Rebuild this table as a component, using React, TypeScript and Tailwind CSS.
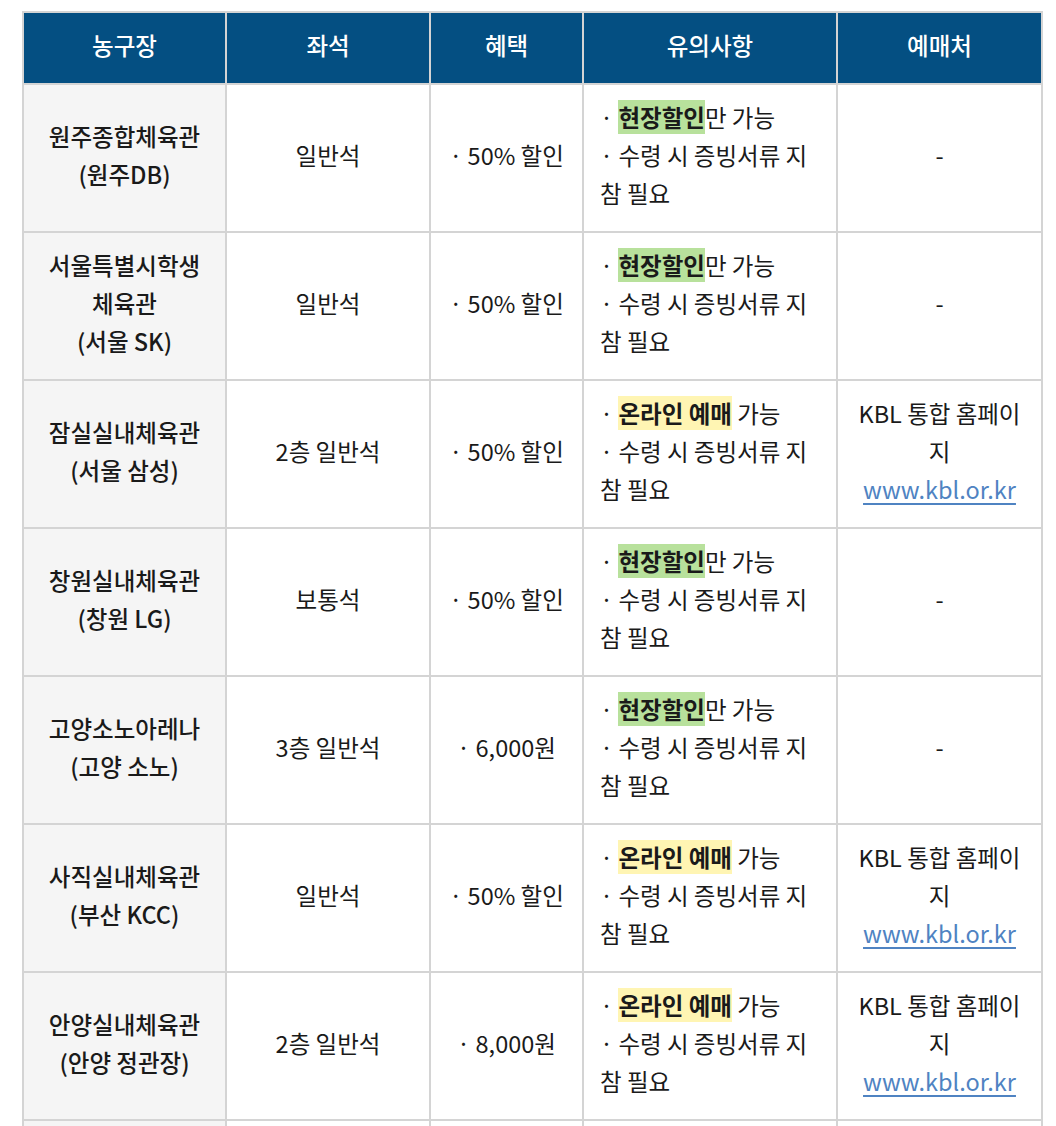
import React from 'react';

type Row = {
  arena: string[];
  seat: string;
  benefit: string;
  online: boolean;
};

const rows: Row[] = [
  { arena: ['원주종합체육관', '(원주DB)'], seat: '일반석', benefit: '· 50% 할인', online: false },
  { arena: ['서울특별시학생', '체육관', '(서울 SK)'], seat: '일반석', benefit: '· 50% 할인', online: false },
  { arena: ['잠실실내체육관', '(서울 삼성)'], seat: '2층 일반석', benefit: '· 50% 할인', online: true },
  { arena: ['창원실내체육관', '(창원 LG)'], seat: '보통석', benefit: '· 50% 할인', online: false },
  { arena: ['고양소노아레나', '(고양 소노)'], seat: '3층 일반석', benefit: '· 6,000원', online: false },
  { arena: ['사직실내체육관', '(부산 KCC)'], seat: '일반석', benefit: '· 50% 할인', online: true },
  { arena: ['안양실내체육관', '(안양 정관장)'], seat: '2층 일반석', benefit: '· 8,000원', online: true },
  { arena: ['울산동천체육관', '(울산 현대모비스)'], seat: '일반석', benefit: '· 50% 할인', online: false },
];

// text sits a few px above the cell centre in the original
const cell = 'border-2 border-[#d4d4d4] px-4 pt-[13px] pb-[19px] align-middle';

export default function App() {
  return (
    <div
      className="bg-white h-[1126px] overflow-hidden pt-[11px] pl-[22px] text-[23.5px] leading-[38px] text-[#1a1a1a]"
      style={{ fontFamily: '"Noto Sans CJK KR", "Noto Sans", sans-serif' }}
    >
      <table className="table-fixed border-collapse w-[1019px]">
        <colgroup>
          <col className="w-[203px]" />
          <col className="w-[204px]" />
          <col className="w-[153px]" />
          <col className="w-[254px]" />
          <col className="w-[205px]" />
        </colgroup>
        <thead>
          <tr className="bg-[#044f82] text-white">
            {['농구장', '좌석', '혜택', '유의사항', '예매처'].map((h) => (
              <th key={h} className={`${cell} font-medium text-center`}>
                {h}
              </th>
            ))}
          </tr>
        </thead>
        <tbody>
          {rows.map((r) => (
            <tr key={r.arena[0]} className="h-[148px]">
              <td className={`${cell} bg-[#f5f5f5] text-center font-medium`}>
                {r.arena.map((l) => (
                  <div key={l}>{l}</div>
                ))}
              </td>
              <td className={`${cell} text-center`}>{r.seat}</td>
              <td className={`${cell} text-center`}>{r.benefit}</td>
              <td className={`${cell} text-left align-top`}>
                <div>
                  ·{' '}
                  {r.online ? (
                    <>
                      <span className="bg-[#fff5b3] font-bold">온라인 예매</span> 가능
                    </>
                  ) : (
                    <>
                      <span className="bg-[#b8e19c] font-bold">현장할인</span>만 가능
                    </>
                  )}
                </div>
                <div>· 수령 시 증빙서류 지참 필요</div>
              </td>
              <td className={`${cell} text-center`}>
                {r.online ? (
                  <>
                    <div>KBL 통합 홈페이지</div>
                    <a href="#" className="text-[#4f83c2] underline underline-offset-4">
                      www.kbl.or.kr
                    </a>
                  </>
                ) : (
                  '-'
                )}
              </td>
            </tr>
          ))}
        </tbody>
      </table>
    </div>
  );
}
